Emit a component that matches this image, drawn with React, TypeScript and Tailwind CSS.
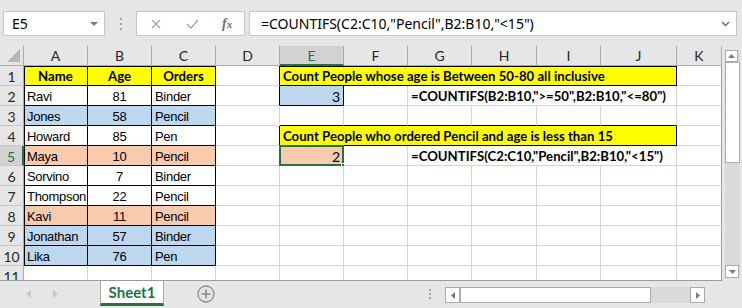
import React from 'react';

type Cell = {
  text?: string;
  span?: number;
  bg?: string;
  align?: 'left' | 'center' | 'right';
  bold?: boolean;
  br?: boolean; // black right border
  bb?: boolean; // black bottom border
  bl?: boolean; // black left line (inset)
  bt?: boolean; // black top line (inset)
  sel?: boolean;
};

const YELLOW = 'bg-[#ffff00]';
const BLUE = 'bg-[#bdd7ee]';
const ORANGE = 'bg-[#f8cbad]';

const COLS = ['A', 'B', 'C', 'D', 'E', 'F', 'G', 'H', 'I', 'J', 'K'];

const people: [string, string, string, string?][] = [
  ['Ravi', '81', 'Binder'],
  ['Jones', '58', 'Pencil', BLUE],
  ['Howard', '85', 'Pen'],
  ['Maya', '10', 'Pencil', ORANGE],
  ['Sorvino', '7', 'Binder'],
  ['Thompson', '22', 'Pencil'],
  ['Kavi', '11', 'Pencil', ORANGE],
  ['Jonathan', '57', 'Binder', BLUE],
  ['Lika', '76', 'Pen', BLUE],
];

const buildRows = (): Cell[][] => {
  const rows: Cell[][] = [];
  // row 1
  rows.push([
    { text: 'Name', bg: YELLOW, align: 'center', bold: true, br: true, bb: true, bl: true, bt: true },
    { text: 'Age', bg: YELLOW, align: 'center', bold: true, br: true, bb: true, bt: true },
    { text: 'Orders', bg: YELLOW, align: 'center', bold: true, br: true, bb: true, bt: true },
    { br: true },
    { text: 'Count People whose age is Between 50-80 all inclusive', span: 6, bg: YELLOW, bold: true, br: true, bb: true, bt: true },
    {},
  ]);
  people.forEach(([name, age, order, bg], i) => {
    const r = i + 2;
    const row: Cell[] = [
      { text: name, bg, br: true, bb: true, bl: true },
      { text: age, bg, align: 'center', br: true, bb: true },
      { text: order, bg, br: true, bb: true },
    ];
    if (r === 2) {
      row.push({ br: true }, { text: '3', bg: BLUE, align: 'right', br: true, bb: true }, {});
      row.push({ text: '=COUNTIFS(B2:B10,">=50",B2:B10,"<=80")', span: 4, bold: true }, {});
    } else if (r === 3) {
      row.push({}, { bb: true }, { bb: true }, { bb: true }, { bb: true }, { bb: true }, { bb: true }, {});
    } else if (r === 4) {
      row.push({ br: true }, { text: 'Count People who ordered Pencil and age is less than 15', span: 6, bg: YELLOW, bold: true, br: true, bb: true }, {});
    } else if (r === 5) {
      row.push({}, { text: '2', bg: ORANGE, align: 'right', sel: true }, {});
      row.push({ text: '=COUNTIFS(C2:C10,"Pencil",B2:B10,"<15")', span: 4, bold: true }, {});
    } else {
      for (let c = 3; c < 11; c++) row.push({});
    }
    rows.push(row);
  });
  rows.push(Array.from({ length: 11 }, () => ({})));
  return rows;
};

const spanClass: Record<number, string> = { 1: '', 4: 'col-span-4', 6: 'col-span-6' };

const GridCell = ({ cell, col }: { cell: Cell; col: number }) => {
  const isK = col === 10;
  let shadowClass = '';
  if (cell.bl && cell.bt) shadowClass = 'shadow-[inset_1px_0_0_#000,inset_0_1px_0_#000]';
  else if (cell.bl) shadowClass = 'shadow-[inset_1px_0_0_#000]';
  else if (cell.bt) shadowClass = 'shadow-[inset_0_1px_0_#000]';

  let fontClass = "font-['Liberation_Sans',sans-serif] text-[13px] tracking-[-0.3px]";
  if (cell.bold) fontClass = "font-['Lato',sans-serif] text-[13.2px] font-bold";
  else if (cell.align === 'right') fontClass = "font-['Lato',sans-serif] text-[14px]";

  return (
    <div
      className={[
        'relative flex items-center overflow-visible whitespace-nowrap border-r border-b pt-[2px] text-black',
        cell.br ? 'border-r-black' : isK ? 'border-r-[#9b9b9b]' : 'border-r-[#d4d4d4]',
        cell.bb ? 'border-b-black' : 'border-b-[#d4d4d4]',
        spanClass[cell.span ?? 1],
        cell.bg ?? 'bg-white',
        shadowClass,
        cell.align === 'center' ? 'justify-center' : cell.align === 'right' ? 'justify-end pr-[3px]' : 'pl-[3px]',
        fontClass,
      ].join(' ')}
    >
      {cell.text}
      {cell.sel && (
        <>
          <div className="pointer-events-none absolute -left-[1px] -top-[1px] h-[21px] w-[65px] border-2 border-[#217346]" />
          <div className="absolute -bottom-[3px] -right-[3px] h-[5px] w-[5px] border border-white bg-[#217346]" />
        </>
      )}
    </div>
  );
};

const Sheet = () => {
  const rows = buildRows();
  return (
    <div className="h-[235px] w-[722px] overflow-hidden border-b border-[#9b9b9b]">
      <div className="grid auto-rows-[20px] grid-cols-[24px_64px_64px_64px_64px_64px_64px_64px_65px_64px_76px_45px]">
        {/* corner */}
        <div className="relative border-r border-b border-[#ababab] bg-[#e6e6e6]">
          <svg className="absolute bottom-[3px] right-[3px]" width="13" height="13" viewBox="0 0 13 13">
            <polygon points="13,0 13,13 0,13" fill="#b7b7b7" />
          </svg>
        </div>
        {COLS.map((c) => (
          <div
            key={c}
            className={
              c === 'E'
                ? "flex items-center justify-center border-r border-b-2 border-r-[#ababab] border-b-[#217346] bg-[#d2d2d2] pt-[1px] font-['Lato',sans-serif] text-[14px] text-[#217346]"
                : "flex items-center justify-center border-r border-b border-[#ababab] bg-[#e6e6e6] font-['Lato',sans-serif] text-[14px] text-[#262626]"
            }
          >
            {c}
          </div>
        ))}
        {rows.map((row, ri) => {
          let col = 0;
          return (
            <React.Fragment key={ri}>
              <div
                className={
                  ri === 4
                    ? "flex items-center justify-center border-r-2 border-b border-r-[#217346] border-b-[#c6c6c6] bg-[#d2d2d2] pt-[2px] font-['Lato',sans-serif] text-[14px] text-[#217346]"
                    : "flex items-center justify-center border-r border-b border-r-[#ababab] border-b-[#c6c6c6] bg-[#e6e6e6] pt-[2px] font-['Lato',sans-serif] text-[14px] text-[#262626]"
                }
              >
                {ri + 1}
              </div>
              {row.map((cell, ci) => {
                const c = col;
                col += cell.span ?? 1;
                return <GridCell key={ci} cell={cell} col={c + (cell.span ?? 1) - 1} />;
              })}
            </React.Fragment>
          );
        })}
      </div>
    </div>
  );
};

const VScroll = () => (
  <div className="flex h-[235px] w-[20px] flex-col pl-[3px] pt-[4px]">
    <div className="flex h-[228px] w-[15px] flex-col bg-[#dadada]">
      <div className="flex h-[12px] w-[13px] items-center justify-center border border-[#ababab] bg-white">
        <svg width="7" height="4" viewBox="0 0 7 4">
          <polygon points="3.5,0 7,4 0,4" fill="#7a7a7a" />
        </svg>
      </div>
      <div className="h-[101px] w-[15px] border border-[#ababab] bg-white" />
      <div className="flex-1" />
      <div className="flex h-[13px] w-[14px] items-center justify-center border border-[#ababab] bg-white">
        <svg width="7" height="4" viewBox="0 0 7 4">
          <polygon points="0,0 7,0 3.5,4" fill="#7a7a7a" />
        </svg>
      </div>
    </div>
  </div>
);

const FormulaBar = () => (
  <div className="flex h-[47px] items-start px-[3px] pt-[11px] font-['Noto_Sans',sans-serif] text-[14px] text-black">
    <div className="flex h-[25px] w-[102px] items-center justify-between border border-[#c6c6c6] bg-white pl-[8px] pr-[6px]">
      <span>E5</span>
      <svg width="8" height="4" viewBox="0 0 8 4">
        <polygon points="0,0 8,0 4,4" fill="#7a7a7a" />
      </svg>
    </div>
    <div className="flex h-[25px] w-[31px] flex-col items-center justify-center gap-[3px]">
      <div className="h-[2px] w-[2px] bg-[#a6a6a6]" />
      <div className="h-[2px] w-[2px] bg-[#a6a6a6]" />
      <div className="h-[2px] w-[2px] bg-[#a6a6a6]" />
    </div>
    <div className="flex h-[25px] w-[109px] items-center border border-[#c6c6c6] bg-white">
      <svg className="ml-[14px]" width="10" height="10" viewBox="0 0 10 10">
        <path d="M1 1 L9 9 M9 1 L1 9" stroke="#a6a6a6" strokeWidth="1.3" />
      </svg>
      <svg className="ml-[25px]" width="13" height="10" viewBox="0 0 13 10">
        <path d="M1 5 L5 9 L12 1" stroke="#a6a6a6" strokeWidth="1.4" fill="none" />
      </svg>
      <span className="ml-[23px] font-['Liberation_Serif',serif] text-[14px] font-bold italic text-[#6f6f6f]">
        f<span className="text-[11px]">x</span>
      </span>
    </div>
    <div className="ml-[4px] flex h-[25px] w-[488px] items-center justify-between border border-[#c6c6c6] bg-white pl-[11px] pr-[6px]">
      <span>=COUNTIFS(C2:C10,"Pencil",B2:B10,"&lt;15")</span>
      <svg width="9" height="6" viewBox="0 0 9 6">
        <path d="M1 1 L4.5 4.5 L8 1" stroke="#6f6f6f" strokeWidth="1.5" fill="none" />
      </svg>
    </div>
  </div>
);

const TabBar = () => (
  <div className="flex h-[27px] items-start">
    <div className="flex h-[26px] w-[100px] items-center gap-[22px] pl-[26px]">
      <svg width="5" height="8" viewBox="0 0 5 8">
        <polygon points="5,0 5,8 0,4" fill="#c8c8c8" />
      </svg>
      <svg width="5" height="8" viewBox="0 0 5 8">
        <polygon points="0,0 0,8 5,4" fill="#c8c8c8" />
      </svg>
    </div>
    <div className="flex h-[25px] w-[64px] items-center justify-center border-x border-b-[3px] border-x-[#ababab] border-b-[#217346] bg-white font-['Lato',sans-serif] text-[15px] font-bold text-[#217346]">
      Sheet1
    </div>
    <div className="flex h-[26px] w-[83px] items-center justify-center">
      <svg width="18" height="18" viewBox="0 0 18 18">
        <circle cx="9" cy="9" r="8" fill="none" stroke="#8c8c8c" strokeWidth="1.3" />
        <path d="M9 4.5 V13.5 M4.5 9 H13.5" stroke="#8c8c8c" strokeWidth="1.6" />
      </svg>
    </div>
    <div className="flex h-[26px] w-[198px] items-center justify-end pr-[14px]">
      <div className="flex flex-col gap-[2px]">
        <div className="h-[2px] w-[2px] bg-[#a6a6a6]" />
        <div className="h-[2px] w-[2px] bg-[#a6a6a6]" />
        <div className="h-[2px] w-[2px] bg-[#a6a6a6]" />
      </div>
    </div>
    <div className="mt-[6px] flex h-[16px] w-[260px] bg-[#dadada]">
      <div className="flex h-[16px] w-[15px] items-center justify-center border border-[#ababab] bg-white">
        <svg width="4" height="7" viewBox="0 0 4 7">
          <polygon points="4,0 4,7 0,3.5" fill="#7a7a7a" />
        </svg>
      </div>
      <div className="h-[16px] w-[191px] border border-[#ababab] bg-white" />
      <div className="flex-1" />
      <div className="flex h-[16px] w-[15px] items-center justify-center border border-[#ababab] bg-white">
        <svg width="4" height="7" viewBox="0 0 4 7">
          <polygon points="0,0 0,7 4,3.5" fill="#7a7a7a" />
        </svg>
      </div>
    </div>
  </div>
);

const App = () => {
  return (
    <div className="flex h-[308px] w-[742px] flex-col overflow-hidden bg-[#e6e6e6]">
      <FormulaBar />
      <div className="flex">
        <Sheet />
        <VScroll />
      </div>
      <TabBar />
    </div>
  );
};

export default App;
